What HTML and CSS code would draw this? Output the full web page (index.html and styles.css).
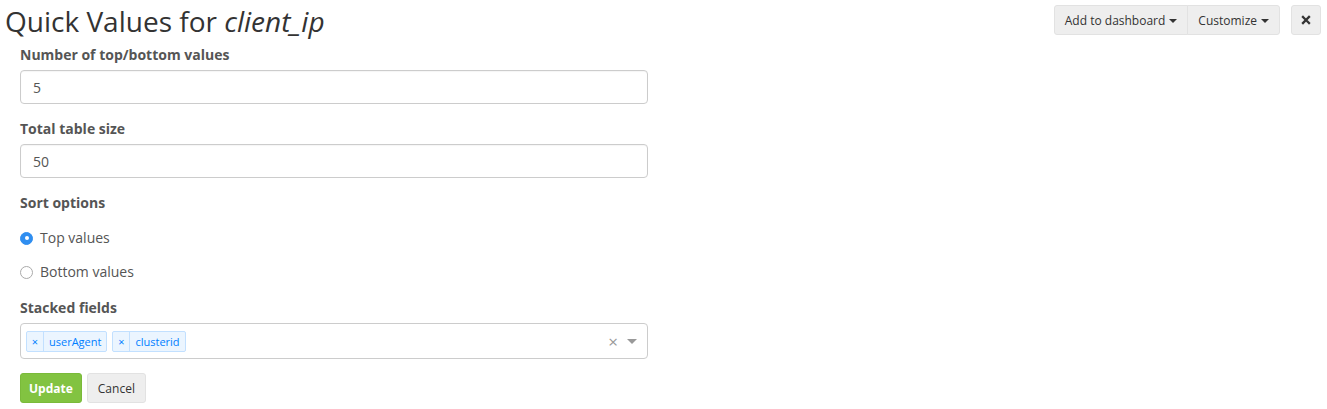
FILE: index.html
```html
<!DOCTYPE html>
<html>
<head>
<meta charset="utf-8">
<link rel="stylesheet" href="styles.css">
</head>
<body>
<div class="page">
  <div class="header">
    <h1 class="title">Quick Values for <em>client_ip</em></h1>
    <div class="actions">
      <div class="btn-group">
        <button class="btn btn-default">Add to dashboard <span class="caret"></span></button><button class="btn btn-default">Customize <span class="caret"></span></button>
      </div>
      <button class="btn btn-default btn-close" aria-label="Close">
        <svg width="10" height="10" viewBox="0 0 10 10"><path d="M2 2 L8 8 M8 2 L2 8" stroke="#333" stroke-width="2.3" stroke-linecap="square"/></svg>
      </button>
    </div>
  </div>
  <form class="form">
    <div class="form-group">
      <label class="control-label">Number of top/bottom values</label>
      <input class="form-control" type="text" value="5">
    </div>
    <div class="form-group">
      <label class="control-label">Total table size</label>
      <input class="form-control" type="text" value="50">
    </div>
    <div class="form-group sort">
      <label class="control-label">Sort options</label>
      <div class="radio"><span class="radio-dot checked"></span>Top values</div>
      <div class="radio"><span class="radio-dot"></span>Bottom values</div>
    </div>
    <div class="form-group stacked">
      <label class="control-label">Stacked fields</label>
      <div class="select">
        <div class="tags">
          <span class="tag"><span class="tag-x">×</span><span class="tag-label">userAgent</span></span>
          <span class="tag"><span class="tag-x">×</span><span class="tag-label">clusterid</span></span>
        </div>
        <span class="select-clear">×</span>
        <span class="select-arrow"></span>
      </div>
    </div>
    <div class="buttons">
      <button type="button" class="btn btn-success">Update</button>
      <button type="button" class="btn btn-default btn-cancel">Cancel</button>
    </div>
  </form>
</div>
</body>
</html>
```
FILE: styles.css
```css
* { box-sizing: border-box; }
html, body { margin: 0; padding: 0; background: #fff; }
body {
  font-family: "Open Sans", "Noto Sans", sans-serif;
  font-size: 14px;
  color: #555;
  width: 1327px;
  height: 409px;
  overflow: hidden;
}
.page { padding: 0 6px 0 5px; }
.header {
  display: flex;
  justify-content: space-between;
  align-items: flex-start;
  height: 44px;
}
.title {
  margin: 0;
  padding-top: 1px;
  font-weight: 400;
  font-size: 28px;
  line-height: 40px;
  color: #333;
}
.title em { font-style: italic; }
.actions {
  display: flex;
  gap: 11px;
  padding-top: 5px;
}
.btn-group { display: flex; }
.btn {
  font-family: "Open Sans", "Noto Sans", sans-serif;
  font-size: 12px;
  height: 30px;
  padding: 0 10px;
  border-radius: 3px;
  cursor: pointer;
  display: inline-flex;
  align-items: center;
  gap: 4px;
}
.btn-default {
  background: #eee;
  border: 1px solid #e2e2e2;
  color: #333;
}
.btn-group .btn:first-child { border-radius: 3px 0 0 3px; }
.btn-group .btn:last-child { border-radius: 0 3px 3px 0; margin-left: -1px; }
.caret {
  display: inline-block;
  width: 0; height: 0;
  border-top: 4px solid #333;
  border-left: 4px solid transparent;
  border-right: 4px solid transparent;
  margin-top: 1px;
}
.btn-close { width: 30px; padding: 0; justify-content: center; }

.form { padding-left: 15px; width: 643px; }
.form-group { margin-bottom: 14px; display: flex; flex-direction: column; }
.control-label {
  font-weight: 700;
  font-size: 14px;
  line-height: 22px;
  margin-bottom: 4px;
  color: #555;
}
.form-control {
  height: 34px;
  border: 1px solid #ccc;
  border-radius: 4px;
  padding: 0 12px;
  font-family: "Open Sans", "Noto Sans", sans-serif;
  font-size: 14px;
  color: #555;
  box-shadow: inset 0 1px 1px rgba(0,0,0,0.04);
}
.sort { margin-bottom: 15px; }
.sort .control-label { margin-bottom: 14px; }
.radio {
  display: flex;
  align-items: center;
  height: 20px;
  line-height: 20px;
  font-size: 14px;
  color: #555;
  margin-bottom: 14px;
}
.radio:last-child { margin-bottom: 0; }
.radio-dot {
  width: 13px; height: 13px;
  border-radius: 50%;
  border: 1px solid #aaa;
  background: #fff;
  margin-right: 7px;
  position: relative;
}
.radio-dot.checked {
  background: #2f8ef0;
  border-color: #2f8ef0;
}
.radio-dot.checked::after {
  content: "";
  position: absolute;
  left: 3.5px; top: 3.5px;
  width: 4px; height: 4px;
  border-radius: 50%;
  background: #fff;
}
.stacked .control-label { margin-bottom: 4px; }
.select {
  height: 36px;
  border: 1px solid #ccc;
  border-radius: 4px;
  display: flex;
  align-items: center;
  padding: 0 10px 0 5px;
}
.tags { display: flex; gap: 5px; flex: 1; }
.tag {
  display: inline-flex;
  height: 21px;
  border: 1px solid #c2e0ff;
  background: #ebf5ff;
  border-radius: 2px;
  color: #007eff;
  font-size: 11px;
  line-height: 19px;
}
.tag-x {
  width: 17px;
  text-align: center;
  border-right: 1px solid #c2e0ff;
  font-size: 11px;
}
.tag-label { padding: 0 5px; }
.select-clear {
  color: #999;
  font-size: 17px;
  line-height: 1;
  margin-right: 9px;
}
.select-arrow {
  width: 0; height: 0;
  border-top: 5px solid #999;
  border-left: 5px solid transparent;
  border-right: 5px solid transparent;
}
.buttons { display: flex; gap: 5px; }
.buttons .btn { height: 30px; padding: 0 8px; }
.buttons .btn-cancel { padding: 0 10px; }
.btn-success {
  background: #82c341;
  border: 1px solid #7aba3a;
  color: #fff;
  font-weight: 700;
}
```
